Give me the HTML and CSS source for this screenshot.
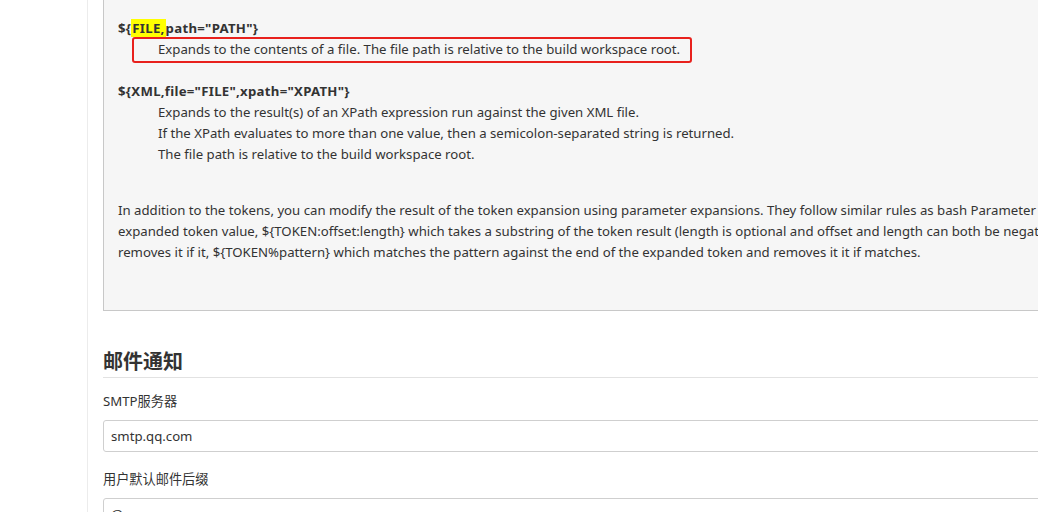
FILE: index.html
```html
<!DOCTYPE html>
<html lang="en">
<head>
<meta charset="utf-8">
<title>Jenkins</title>
<link rel="stylesheet" href="styles.css">
</head>
<body>
<div class="page">
  <aside class="sidebar"></aside>
  <main class="main">
    <div class="help">
      <div class="token"><b>${<mark>FILE,</mark>path="PATH"}</b></div>
      <div class="desc annotated">Expands to the contents of a file. The file path is relative to the build workspace root.<span class="redbox"></span></div>
      <div class="token gap"><b>${XML,file="FILE",xpath="XPATH"}</b></div>
      <div class="desc">Expands to the result(s) of an XPath expression run against the given XML file.</div>
      <div class="desc">If the XPath evaluates to more than one value, then a semicolon-separated string is returned.</div>
      <div class="desc">The file path is relative to the build workspace root.</div>
      <p class="para">In addition to the tokens, you can modify the result of the token expansion using parameter expansions. They follow similar rules as bash Parameter Expansion<br>expanded token value, ${TOKEN:offset:length} which takes a substring of the token result (length is optional and offset and length can both be negative<br>removes it if it, ${TOKEN%pattern} which matches the pattern against the end of the expanded token and removes it it if matches.</p>
    </div>
    <section class="section">
      <h2 class="section-title">邮件通知</h2>
      <label class="field-label">SMTP服务器</label>
      <div class="input">smtp.qq.com</div>
      <label class="field-label">用户默认邮件后缀</label>
      <div class="input">@qq.com</div>
    </section>
  </main>
</div>
</body>
</html>
```
FILE: styles.css
```css
html, body {
  margin: 0;
  padding: 0;
  background: #fff;
  overflow: hidden;
}
body {
  width: 1038px;
  height: 512px;
  font-family: "Noto Sans", "Noto Sans CJK SC", sans-serif;
  font-size: 13.2px;
  color: #333;
}
.page {
  display: flex;
  height: 512px;
}
.sidebar {
  width: 87px;
  flex: none;
  border-right: 1px solid #ececec;
}
.main {
  flex: 1;
  min-width: 0;
  padding-left: 15px;
  overflow: hidden;
}
.help {
  width: 1100px;
  background: #f6f6f6;
  border: 1px solid #c8c8c8;
  border-top: none;
  padding: 18px 0 47px 14px;
  line-height: 21px;
  white-space: nowrap;
}
.token b {
  font-weight: 700;
  letter-spacing: 0.28px;
}
.token mark {
  background: #ffff00;
  color: #333;
  padding: 0 1px;
}
.token.gap {
  margin-top: 21px;
}
.desc {
  padding-left: 40px;
}
.annotated {
  position: relative;
}
.redbox {
  position: absolute;
  left: 14px;
  top: -2px;
  width: 556px;
  height: 22px;
  border: 2px solid #e8211d;
  border-radius: 3px;
}
.para {
  margin: 35px 0 0;
}
.section {
  padding-top: 37px;
}
.section-title {
  margin: 0;
  font-size: 20px;
  font-weight: 700;
  line-height: 28px;
  padding-bottom: 1px;
  border-bottom: 1px solid #e2e2e2;
  color: #333;
}
.field-label {
  display: block;
  margin-top: 13px;
  line-height: 21px;
}
.input {
  margin-top: 8px;
  height: 30px;
  line-height: 30px;
  border: 1px solid #cfcfcf;
  border-radius: 3px;
  padding-left: 7px;
  background: #fff;
  width: 1000px;
}
.input + .field-label {
  margin-top: 17px;
}
```
